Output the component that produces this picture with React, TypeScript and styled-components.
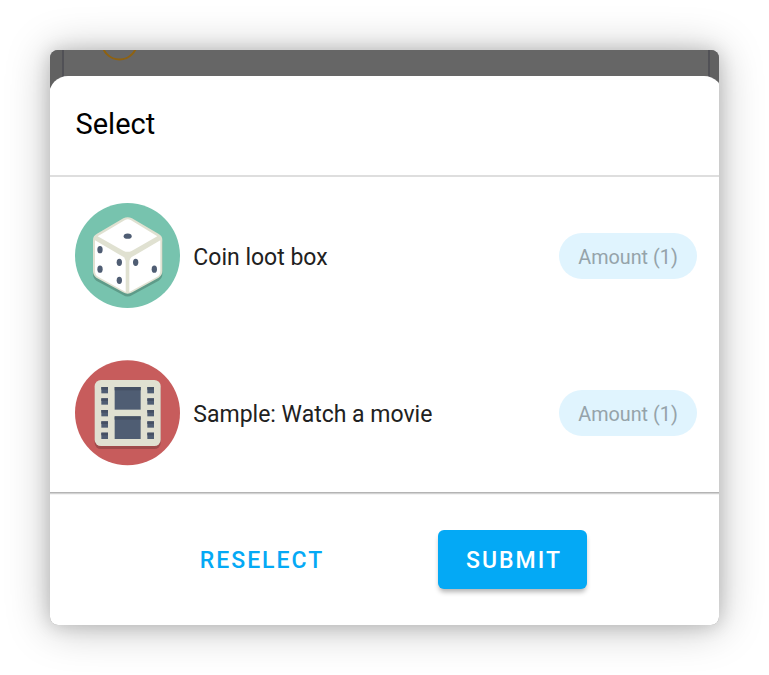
import React from "react";
import styled, { createGlobalStyle } from "styled-components";

const GlobalStyle = createGlobalStyle`
  * { box-sizing: border-box; }
  body { margin: 0; background: #fff; font-family: Roboto, sans-serif; }
`;

const Page = styled.main`
  width: 769px;
  height: 675px;
  padding: 50px;
  overflow: hidden;
`;

const Screen = styled.div`
  height: 575px;
  border-radius: 8px;
  box-shadow: 0 2px 44px rgba(0, 0, 0, 0.27), 0 1px 18px rgba(0, 0, 0, 0.16);
`;

const Viewport = styled.div`
  height: 100%;
  border-radius: 8px;
  overflow: hidden;
  background: #666;
  display: flex;
  flex-direction: column;
`;

const Backdrop = styled.div`
  height: 26px;
  margin-bottom: -26px;
  flex: none;
  display: flex;
  justify-content: space-between;
`;

const Gutter = styled.div<{ $side: "left" | "right" }>`
  width: ${(p) => (p.$side === "left" ? 14 : 11)}px;
  height: 45px;
  background: #616161;
  border-${(p) => (p.$side === "left" ? "right" : "left")}: 2px solid #515156;
`;

const Ring = styled.svg`
  width: 40px;
  height: 26px;
  margin-left: 36px;
  margin-right: auto;
`;

const Sheet = styled.section`
  flex: 1;
  margin: 26px -4px 0 -1px;
  border-radius: 19px 19px 0 0;
  background: #fff;
  display: flex;
  flex-direction: column;
  position: relative;
`;

const Header = styled.header`
  height: 101px;
  padding: 0 26.5px 3px;
  border-bottom: 2px solid #dedede;
  display: flex;
  align-items: center;
`;

const Title = styled.h1`
  margin: 0;
  font-size: 29px;
  font-weight: 400;
  line-height: 36px;
  color: #000;
`;

const List = styled.ul`
  list-style: none;
  margin: 0;
  padding: 0;
  height: 315px;
`;

const Item = styled.li`
  height: 157px;
  padding: 0 26px;
  display: flex;
  align-items: center;
`;

const Icon = styled.svg`
  width: 105px;
  height: 105px;
  flex: none;
`;

const Label = styled.span`
  margin-left: 13.3px;
  flex: 1;
  font-size: 23px;
  line-height: 30px;
  color: #212121;
  padding-top: 4px;
`;

const Chip = styled.span`
  width: 138px;
  height: 46px;
  padding-top: 3px;
  border-radius: 23px;
  background: #e0f4fe;
  color: #95a3aa;
  font-size: 19.8px;
  display: flex;
  align-items: center;
  justify-content: center;
`;

const Footer = styled.footer`
  flex: 1;
  border-top: 1px solid #b4b4b4;
  box-shadow: inset 0 1px 0 #d2d2d2, inset 0 2px 0 #f4f4f4;
  padding: 37px 0 0 123px;
  display: flex;
`;

const Button = styled.button<{ $primary?: boolean }>`
  width: ${(p) => (p.$primary ? 149 : 178)}px;
  height: 59px;
  margin-left: ${(p) => (p.$primary ? 88 : 0)}px;
  padding: 2px 0 0 ${(p) => (p.$primary ? 3 : 2)}px;
  border: 0;
  border-radius: 6px;
  background: ${(p) => (p.$primary ? "#04a9f5" : "transparent")};
  color: ${(p) => (p.$primary ? "#fff" : "#04a9f5")};
  box-shadow: ${(p) => (p.$primary ? "0 4px 5px -1px rgba(0, 0, 0, 0.3)" : "none")};
  font: 500 23px/28px Roboto, sans-serif;
  letter-spacing: 2px;
`;

const DiceIcon = () => (
  <Icon viewBox="30 24 315 315">
    <circle cx="187.5" cy="181.5" r="157.5" fill="#77c3ae" />
    <path
      d="M175 79Q188 71 201 79L280 122Q292 129 292 143V237Q292 250 281 257L202 300Q188 309 174 300L94 257Q84 250 84 237V143Q84 129 96 122Z"
      fill="#5e9b89"
    />
    <path
      d="M175 70Q188 64 201 70L280 116Q292 122 292 135V228Q292 241 281 248L202 292Q188 300 174 292L94 248Q84 241 84 228V135Q84 122 96 116Z"
      fill="#e0e1d1"
    />
    <path d="M180 75Q188 71 197 75L277 124L201 167Q188 174 175 167L98 124Z" fill="#fff" />
    <path d="M90 136L172 184Q182 190 182 201V291L99 245Q90 240 90 228Z" fill="#fff" />
    <path d="M286 136L204 184Q193 190 193 201V291L277 245Q286 240 286 228Z" fill="#fff" />
    <g fill="#4f5d73">
      <ellipse cx="188" cy="123.5" rx="12" ry="8" />
      <ellipse cx="105" cy="164" rx="8" ry="11" />
      <ellipse cx="105" cy="222.5" rx="8" ry="11" />
      <ellipse cx="163" cy="202" rx="8" ry="11" />
      <ellipse cx="163" cy="256" rx="8" ry="11" />
      <ellipse cx="212" cy="202" rx="8" ry="11" />
      <ellipse cx="268" cy="222.5" rx="8" ry="11" />
    </g>
  </Icon>
);

const perforationRows = [105, 139, 174, 208, 242];

const FilmIcon = () => (
  <Icon viewBox="30 24 315 315" overflow="visible">
    <circle cx="187.5" cy="182.5" r="157.5" fill="#c75c5c" />
    <rect x="89" y="94" width="198" height="197" rx="19" fill="#9f4a4a" />
    <rect x="89" y="84" width="198" height="198" rx="19" fill="#e0e0d1" />
    {perforationRows.map((y) => (
      <g key={y}>
        <rect x="109" y={y} width="20" height="19" fill="#4f5d73" />
        <rect x="247" y={y} width="20" height="19" fill="#4f5d73" />
        <rect x="109" y={y} width="20" height="8" fill="#455064" />
        <rect x="247" y={y} width="20" height="8" fill="#455064" />
      </g>
    ))}
    <rect x="149" y="105" width="78" height="68" fill="#4f5d73" />
    <rect x="149" y="193" width="78" height="68" fill="#4f5d73" />
    <rect x="149" y="105" width="78" height="10" fill="#455064" />
    <rect x="149" y="193" width="78" height="10" fill="#455064" />
  </Icon>
);

const items = [
  { label: "Coin loot box", icon: <DiceIcon />, amount: 1 },
  { label: "Sample: Watch a movie", icon: <FilmIcon />, amount: 1 },
];

export default function App() {
  return (
    <>
      <GlobalStyle />
      <Page>
        <Screen>
          <Viewport>
            <Backdrop>
              <Gutter $side="left" />
              <Ring viewBox="0 0 40 26">
                <circle cx="19.5" cy="-8" r="17.5" fill="none" stroke="#8f6210" strokeWidth="2" />
              </Ring>
              <Gutter $side="right" />
            </Backdrop>
            <Sheet>
              <Header>
                <Title>Select</Title>
              </Header>
              <List>
                {items.map((item) => (
                  <Item key={item.label}>
                    {item.icon}
                    <Label>{item.label}</Label>
                    <Chip>Amount ({item.amount})</Chip>
                  </Item>
                ))}
              </List>
              <Footer>
                <Button>RESELECT</Button>
                <Button $primary>SUBMIT</Button>
              </Footer>
            </Sheet>
          </Viewport>
        </Screen>
      </Page>
    </>
  );
}
